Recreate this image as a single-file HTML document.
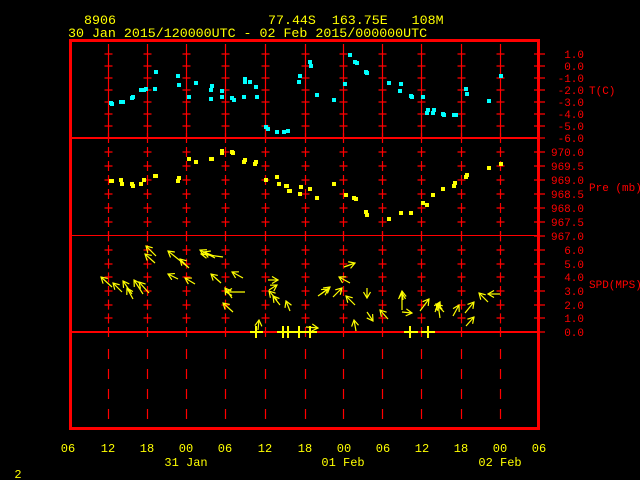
<!DOCTYPE html>
<html><head><meta charset="utf-8"><style>
html,body{margin:0;padding:0;background:#000;}
svg{display:block;}
text{font-family:"Liberation Mono","DejaVu Sans Mono",monospace;}
</style></head><body>
<svg width="640" height="480" viewBox="0 0 640 480" xmlns="http://www.w3.org/2000/svg">
<defs>
<marker id="h" markerWidth="8" markerHeight="8" refX="7" refY="4" orient="auto" markerUnits="userSpaceOnUse">
<path d="M1 0.5L7 4L1 7.5" fill="none" stroke="#ff0" stroke-width="1.2"/>
</marker>
<g id="c" stroke="#f00" fill="none" stroke-width="1.2">
<path d="M0 44V138"/>
<path d="M0 133V236" stroke-dasharray="10 4"/>
<path d="M0 231.33V338" stroke-dasharray="10 3.67"/>
<path d="M0 349V427" stroke-dasharray="10 10"/>
<path d="M-4 54h8M-4 66h8M-4 78h8M-4 90h8M-4 102h8M-4 114h8M-4 126h8M-4 152h8M-4 166h8M-4 180h8M-4 194h8M-4 208h8M-4 222h8M-4 250h8M-4 264h8M-4 277h8M-4 291h8M-4 305h8M-4 318h8"/>
</g>
</defs>
<rect width="640" height="480" fill="#000"/>
<g>
<use href="#c" x="108.5"/><use href="#c" x="147.5"/><use href="#c" x="186.5"/><use href="#c" x="225.5"/><use href="#c" x="265.5"/><use href="#c" x="305.5"/><use href="#c" x="343.5"/><use href="#c" x="382.5"/><use href="#c" x="421.5"/><use href="#c" x="461.5"/><use href="#c" x="500.5"/>
</g>
<g stroke="#f00" fill="none">
<path d="M70 138h470M70 332h470" stroke-width="2"/>
<path d="M70 235.5h470" stroke-width="1"/>
<path d="M534 54h11M534 66h11M534 78h11M534 90h11M534 102h11M534 114h11M534 126h11M534 138h11M534 152h11M534 166h11M534 180h11M534 194h11M534 208h11M534 222h11M534 236h11M534 250h11M534 264h11M534 277h11M534 291h11M534 305h11M534 318h11M534 332h11" stroke-width="1.2"/>
<rect x="70.5" y="40.5" width="468" height="388" stroke-width="3"/>
</g>
<g fill="#0ff">
<rect x="109" y="101" width="4" height="4"/><rect x="110" y="102" width="4" height="4"/><rect x="119" y="100" width="4" height="4"/><rect x="121" y="100" width="4" height="4"/><rect x="130" y="96" width="4" height="4"/><rect x="131" y="95" width="4" height="4"/><rect x="139" y="88" width="4" height="4"/><rect x="142" y="88" width="4" height="4"/><rect x="144" y="87" width="4" height="4"/><rect x="153" y="87" width="4" height="4"/><rect x="154" y="70" width="4" height="4"/><rect x="176" y="74" width="4" height="4"/><rect x="177" y="83" width="4" height="4"/><rect x="187" y="95" width="4" height="4"/><rect x="194" y="81" width="4" height="4"/><rect x="209" y="88" width="4" height="4"/><rect x="210" y="84" width="4" height="4"/><rect x="209" y="97" width="4" height="4"/><rect x="220" y="89" width="4" height="4"/><rect x="220" y="95" width="4" height="4"/><rect x="230" y="96" width="4" height="4"/><rect x="232" y="98" width="4" height="4"/><rect x="242" y="95" width="4" height="4"/><rect x="243" y="77" width="4" height="4"/><rect x="243" y="80" width="4" height="4"/><rect x="254" y="85" width="4" height="4"/><rect x="255" y="95" width="4" height="4"/><rect x="248" y="80" width="4" height="4"/><rect x="264" y="125" width="4" height="4"/><rect x="266" y="127" width="4" height="4"/><rect x="275" y="130" width="4" height="4"/><rect x="282" y="130" width="4" height="4"/><rect x="286" y="129" width="4" height="4"/><rect x="298" y="74" width="4" height="4"/><rect x="297" y="80" width="4" height="4"/><rect x="308" y="60" width="4" height="4"/><rect x="309" y="64" width="4" height="4"/><rect x="315" y="93" width="4" height="4"/><rect x="332" y="98" width="4" height="4"/><rect x="343" y="82" width="4" height="4"/><rect x="348" y="53" width="4" height="4"/><rect x="353" y="60" width="4" height="4"/><rect x="355" y="61" width="4" height="4"/><rect x="364" y="70" width="4" height="4"/><rect x="365" y="71" width="4" height="4"/><rect x="387" y="81" width="4" height="4"/><rect x="399" y="82" width="4" height="4"/><rect x="398" y="89" width="4" height="4"/><rect x="409" y="94" width="4" height="4"/><rect x="410" y="95" width="4" height="4"/><rect x="421" y="95" width="4" height="4"/><rect x="425" y="111" width="4" height="4"/><rect x="426" y="108" width="4" height="4"/><rect x="431" y="111" width="4" height="4"/><rect x="432" y="108" width="4" height="4"/><rect x="441" y="112" width="4" height="4"/><rect x="442" y="113" width="4" height="4"/><rect x="452" y="113" width="4" height="4"/><rect x="454" y="113" width="4" height="4"/><rect x="464" y="87" width="4" height="4"/><rect x="465" y="92" width="4" height="4"/><rect x="487" y="99" width="4" height="4"/><rect x="499" y="74" width="4" height="4"/>
</g>
<g fill="#ff0">
<rect x="109" y="179" width="5" height="4"/><rect x="119" y="178" width="4" height="4"/><rect x="120" y="182" width="4" height="4"/><rect x="131" y="184" width="4" height="4"/><rect x="130" y="182" width="4" height="4"/><rect x="139" y="182" width="4" height="4"/><rect x="142" y="178" width="4" height="4"/><rect x="153" y="174" width="5" height="4"/><rect x="176" y="179" width="4" height="4"/><rect x="177" y="176" width="4" height="4"/><rect x="187" y="157" width="4" height="4"/><rect x="194" y="160" width="4" height="4"/><rect x="209" y="157" width="5" height="4"/><rect x="220" y="151" width="4" height="4"/><rect x="220" y="149" width="4" height="4"/><rect x="230" y="150" width="4" height="4"/><rect x="231" y="151" width="4" height="4"/><rect x="242" y="160" width="4" height="4"/><rect x="243" y="158" width="4" height="4"/><rect x="253" y="162" width="4" height="4"/><rect x="254" y="160" width="4" height="4"/><rect x="264" y="178" width="4" height="4"/><rect x="275" y="175" width="4" height="4"/><rect x="277" y="182" width="4" height="4"/><rect x="284" y="184" width="5" height="4"/><rect x="287" y="189" width="5" height="4"/><rect x="299" y="185" width="4" height="4"/><rect x="298" y="192" width="4" height="4"/><rect x="308" y="187" width="4" height="4"/><rect x="315" y="196" width="4" height="4"/><rect x="332" y="182" width="4" height="4"/><rect x="344" y="193" width="4" height="4"/><rect x="352" y="196" width="4" height="4"/><rect x="354" y="197" width="4" height="4"/><rect x="364" y="210" width="4" height="4"/><rect x="365" y="213" width="4" height="4"/><rect x="387" y="217" width="4" height="4"/><rect x="399" y="211" width="4" height="4"/><rect x="409" y="211" width="4" height="4"/><rect x="421" y="201" width="4" height="4"/><rect x="425" y="203" width="4" height="4"/><rect x="431" y="193" width="4" height="4"/><rect x="441" y="187" width="4" height="4"/><rect x="452" y="184" width="4" height="4"/><rect x="453" y="181" width="4" height="4"/><rect x="464" y="175" width="4" height="4"/><rect x="465" y="173" width="4" height="4"/><rect x="487" y="166" width="4" height="4"/><rect x="499" y="162" width="4" height="4"/>
</g>
<g stroke="#ff0" stroke-width="1.2" fill="none" marker-end="url(#h)">
<path d="M112 287L101 277"/><path d="M122 292L113 283"/><path d="M132 294L123 281"/><path d="M133 299L127 288"/><path d="M143 294L134 280"/><path d="M149 293L139 282"/>
<path d="M156 256L146 246"/><path d="M155 263L145 254"/><path d="M188 267L168 251"/><path d="M189 268L180 259"/>
<path d="M215 258L200 250"/><path d="M223 257L201 254"/><path d="M214 256L204 252"/>
<path d="M178 279L168 274"/><path d="M195 284L185 278"/><path d="M221 283L211 274"/><path d="M243 278L232 272"/>
<path d="M245 292L226 292"/><path d="M232 298L225 288"/><path d="M233 312L223 303"/>
<path d="M258 330L259 320"/><path d="M277 300L269 291"/><path d="M280 305L273 296"/><path d="M290 311L286 301"/><path d="M269 290L277 285"/><path d="M306 327L318 328"/>
<path d="M268 280L278 280"/><path d="M318 296L328 289"/><path d="M321 294L330 287"/><path d="M333 297L342 288"/><path d="M350 283L339 277"/>
<path d="M344 267L355 263"/><path d="M355 305L346 296"/><path d="M367 288L367 298"/><path d="M367 312L373 321"/><path d="M388 319L380 310"/><path d="M356 331L354 320"/>
<path d="M402 310L402 293"/><path d="M402 312L412 313"/><path d="M403 300L402 291"/>
<path d="M420 311L429 299"/><path d="M435 312L440 302"/><path d="M440 318L438 304"/><path d="M444 312L436 304"/>
<path d="M453 316L459 305"/><path d="M465 313L474 302"/><path d="M466 326L474 317"/><path d="M488 302L479 293"/><path d="M500 294L488 294"/>
</g>
<g stroke="#ff0" stroke-width="2">
<path d="M250 332h13M256 326v12M277 332h40M283 326v12M288 326v12M299 326v12M310 326v12M404 332h14M410 326v12M421 332h14M428 326v12"/>
</g>
<g fill="#ff0" font-size="13.3">
<text x="84" y="24">8906</text>
<text x="268" y="24" xml:space="preserve">77.44S  163.75E   108M</text>
<text x="68" y="37">30 Jan 2015/120000UTC - 02 Feb 2015/000000UTC</text>
</g>
<g fill="#ff0" font-size="12" text-anchor="middle">
<text x="68" y="452">06</text><text x="108" y="452">12</text><text x="147" y="452">18</text><text x="186" y="452">00</text><text x="225" y="452">06</text><text x="265" y="452">12</text><text x="305" y="452">18</text><text x="344" y="452">00</text><text x="383" y="452">06</text><text x="422" y="452">12</text><text x="461" y="452">18</text><text x="500" y="452">00</text><text x="539" y="452">06</text>
<text x="186" y="466">31 Jan</text><text x="343" y="466">01 Feb</text><text x="500" y="466">02 Feb</text>
<text x="18" y="478">2</text>
</g>
<g fill="#f00" font-size="11" text-anchor="end">
<text x="584" y="58">1.0</text><text x="584" y="70">0.0</text><text x="584" y="82">-1.0</text><text x="584" y="94">-2.0</text><text x="584" y="106">-3.0</text><text x="584" y="118">-4.0</text><text x="584" y="130">-5.0</text><text x="584" y="142">-6.0</text>
<text x="584" y="156">970.0</text><text x="584" y="170">969.5</text><text x="584" y="184">969.0</text><text x="584" y="198">968.5</text><text x="584" y="212">968.0</text><text x="584" y="226">967.5</text><text x="584" y="240">967.0</text>
<text x="584" y="254">6.0</text><text x="584" y="268">5.0</text><text x="584" y="281">4.0</text><text x="584" y="295">3.0</text><text x="584" y="309">2.0</text><text x="584" y="322">1.0</text><text x="584" y="336">0.0</text>
</g>
<g fill="#f00" font-size="11">
<text x="589" y="94">T(C)</text>
<text x="589" y="191">Pre (mb)</text>
<text x="589" y="288">SPD(MPS)</text>
</g>
</svg>
</body></html>
